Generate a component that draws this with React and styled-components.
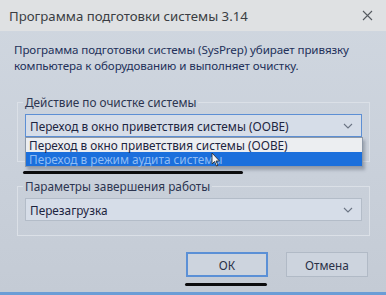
import React from 'react';
import styled, { createGlobalStyle, css } from 'styled-components';

const GlobalStyle = createGlobalStyle`
  html, body { margin: 0; padding: 0; background: #c3cad4; }
  body { font-family: "Noto Sans", "Open Sans", sans-serif; }
`;

const Window = styled.div`
  position: relative;
  width: 386px;
  height: 295px;
  overflow: hidden;
  display: flex;
  flex-direction: column;
  background: linear-gradient(180deg, #d0d7e0 0%, #c9d0da 60%, #c4cbd5 100%);
  border-bottom: 3px solid #6b9dd6;
  box-sizing: border-box;
`;

const TitleBar = styled.div`
  height: 31px;
  flex: none;
  display: flex;
  align-items: center;
  justify-content: space-between;
  padding: 0 13px 0 9px;
  background: #dfe1e3;
  color: #3a3d42;
  font-size: 13.2px;
`;

const Close = styled.svg`
  width: 11px;
  height: 11px;
`;

const Description = styled.p`
  margin: 11px 0 0 14px;
  font-size: 11.6px;
  line-height: 16px;
  color: #23315a;
  letter-spacing: -0.1px;
`;

const Group = styled.fieldset`
  margin: ${p => p.$top}px 16px 0 17px;
  padding: 0 7px ${p => p.$bottom}px 7px;
  border: 1px solid #dbe0e7;
  min-width: 0;
`;

const Legend = styled.legend`
  padding: 0 2px;
  margin-left: -2px;
  font-size: 11.8px;
  line-height: 15px;
  color: #2c3550;
`;

const Combo = styled.div`
  position: relative;
  height: 23px;
  margin-top: 4px;
  box-sizing: border-box;
  display: flex;
  align-items: center;
  justify-content: space-between;
  padding: 0 8px 0 4px;
  font-size: 11.8px;
  color: #1d2540;
  background: #d6dde8;
  border: 1px solid ${p => (p.$focused ? '#5d8fd4' : '#b3bcc8')};
`;

const Chevron = styled.svg`
  width: 10px;
  height: 6px;
`;

const DropList = styled.div`
  position: absolute;
  left: -1px;
  right: -2px;
  top: 22px;
  z-index: 2;
  border: 1px solid #8e99a8;
  background: #eceef1;
  box-shadow: 2px 3px 3px rgba(60, 70, 90, 0.35);
`;

const Option = styled.div`
  height: 14px;
  line-height: 14px;
  display: flex;
  align-items: center;
  padding-left: 3px;
  font-size: 11.8px;
  ${p =>
    p.$selected
      ? css`
          background: #1b6fdc;
          color: #8fbcf4;
        `
      : css`
          color: #1d2540;
        `}
`;

const ButtonRow = styled.div`
  display: flex;
  justify-content: flex-end;
  gap: 18px;
  margin-top: 16px;
  padding-right: 18px;
`;

const Button = styled.div`
  width: 82px;
  height: 25px;
  box-sizing: border-box;
  display: flex;
  align-items: center;
  justify-content: center;
  font-size: 11.8px;
  color: #2a3147;
  background: #cdd4de;
  border: ${p => (p.$primary ? '2px solid #5b90d6' : '1px solid #b1bac6')};
`;

const Mark = styled.div`
  position: absolute;
  left: ${p => p.$x}px;
  top: ${p => p.$y}px;
  width: ${p => p.$w}px;
  height: 3px;
  border-radius: 2px;
  background: #0c0c0e;
  z-index: 3;
`;

const Cursor = styled.svg`
  position: absolute;
  left: 211px;
  top: 152px;
  width: 10px;
  height: 15px;
  z-index: 4;
`;

const App = () => (
  <>
    <GlobalStyle />
    <Window>
      <TitleBar>
        <span>Программа подготовки системы 3.14</span>
        <Close viewBox="0 0 11 11">
          <path d="M1 1 L10 10 M10 1 L1 10" stroke="#555a60" strokeWidth="1.1" fill="none" />
        </Close>
      </TitleBar>
      <Description>
        Программа подготовки системы (SysPrep) убирает привязку
        <br />
        компьютера к оборудованию и выполняет очистку.
      </Description>

      <Group $top={21} $bottom={24}>
        <Legend>Действие по очистке системы</Legend>
        <Combo $focused>
          <span>Переход в окно приветствия системы (OOBE)</span>
          <Chevron viewBox="0 0 10 6">
            <path d="M1 1 L5 5 L9 1" stroke="#6c7584" strokeWidth="1.1" fill="none" />
          </Chevron>
          <DropList>
            <Option>Переход в окно приветствия системы (OOBE)</Option>
            <Option $selected>Переход в режим аудита системы</Option>
          </DropList>
        </Combo>
      </Group>

      <Group $top={17} $bottom={14}>
        <Legend>Параметры завершения работы</Legend>
        <Combo>
          <span>Перезагрузка</span>
          <Chevron viewBox="0 0 10 6">
            <path d="M1 1 L5 5 L9 1" stroke="#6c7584" strokeWidth="1.1" fill="none" />
          </Chevron>
        </Combo>
      </Group>

      <ButtonRow>
        <Button $primary>ОК</Button>
        <Button>Отмена</Button>
      </ButtonRow>

      <Mark $x={23} $y={171} $w={220} />
      <Mark $x={185} $y={283} $w={82} />
      <Cursor viewBox="0 0 10 15">
        <path d="M1 1 L1 12 L3.5 9.5 L5.5 14 L7 13.3 L5 9 L8.5 9 Z" fill="#f4f6fa" stroke="#2a2e38" strokeWidth="0.9" />
      </Cursor>
    </Window>
  </>
);

export default App;
